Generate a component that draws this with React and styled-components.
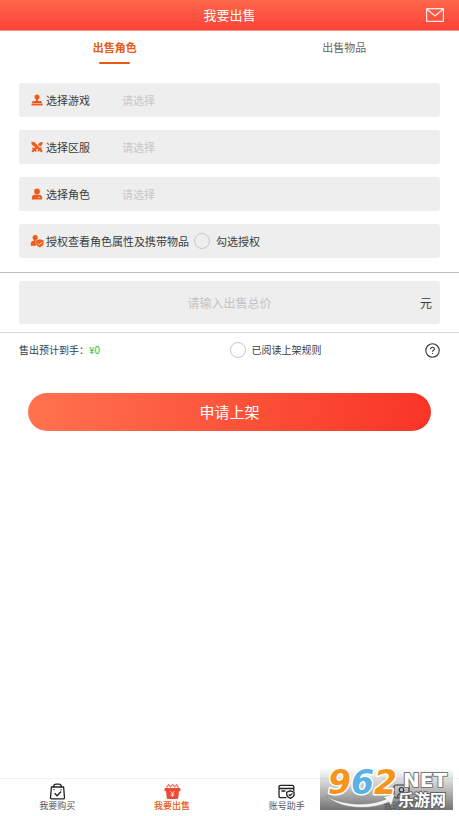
import { useState } from "react";
import styled, { createGlobalStyle } from "styled-components";

const GlobalStyle = createGlobalStyle`
  * {
    box-sizing: border-box;
  }
  body {
    margin: 0;
    background: #fff;
    color: #3c3c3c;
    font-family: "Noto Sans CJK SC", "Noto Sans", sans-serif;
  }
  button,
  input,
  select {
    font-family: inherit;
    color: inherit;
    border: 0;
    padding: 0;
    margin: 0;
    background: none;
  }
  button {
    cursor: pointer;
  }
`;

const Page = styled.div`
  min-height: 100vh;
  display: flex;
  flex-direction: column;
`;

const Header = styled.header`
  display: grid;
  grid-template-columns: 1fr auto 1fr;
  align-items: center;
  height: 31px;
  padding: 0 15px;
  color: #fff;
  background: linear-gradient(#ff674c, #fb4337);
  border-bottom: 1px solid #fb8d83;
  h1 {
    grid-column: 2;
    margin: 0;
    font-size: 13px;
    font-weight: 400;
    line-height: 20px;
  }
  button {
    justify-self: end;
    display: flex;
  }
`;

const Tabs = styled.div`
  display: flex;
  margin-bottom: 19px;
`;

const Tab = styled.button`
  flex: 1;
  display: flex;
  flex-direction: column;
  align-items: center;
  gap: 7px;
  padding-top: 8px;
  font-size: 11px;
  line-height: 16px;
  font-weight: ${(p) => (p.$active ? 700 : 400)};
  color: ${(p) => (p.$active ? "#e8590f" : "#666")};
  &::after {
    content: "";
    width: 31px;
    height: 2px;
    border-radius: 1px;
    background: ${(p) => (p.$active ? "#e8590f" : "transparent")};
  }
`;

const Fields = styled.div`
  display: flex;
  flex-direction: column;
  gap: 13px;
  padding: 0 19px 14px;
`;

const Field = styled.div`
  display: flex;
  align-items: center;
  height: 34px;
  padding: 0 12px;
  background: #eee;
  border-radius: 3px;
  font-size: 11px;
  line-height: 16px;
  svg {
    flex: none;
    margin-right: 3px;
  }
`;

const FieldLabel = styled.label`
  width: 76px;
`;

const Picker = styled.select`
  flex: 1;
  appearance: none;
  font-size: 11px;
  line-height: 16px;
  color: #c8c8c8;
  outline: none;
`;

const Check = styled.label`
  display: flex;
  align-items: center;
  gap: 6px;
  margin-left: ${(p) => (p.$spaced ? "5px" : "0")};
  input {
    appearance: none;
    width: 16px;
    height: 16px;
    border: 1px solid #c8c8c8;
    border-radius: 50%;
  }
  input:checked {
    background: #e8590f;
    border-color: #e8590f;
  }
`;

const PriceArea = styled.div`
  padding: 8px 19px;
  border-top: 1px solid #bebebe;
  border-bottom: 1px solid #ddd;
`;

const PriceBox = styled.div`
  display: grid;
  grid-template-columns: 1fr 8fr 1fr;
  align-items: center;
  height: 43px;
  padding: 0 8px;
  background: #eee;
  border-radius: 3px;
  font-size: 12px;
  input {
    grid-column: 2;
    width: 100%;
    font-size: 12px;
    text-align: center;
    outline: none;
  }
  input::placeholder {
    color: #c4c4c6;
  }
  label {
    justify-self: end;
  }
`;

const Summary = styled.div`
  display: grid;
  grid-template-columns: 1fr 1fr;
  align-items: center;
  padding: 9px 19px;
  font-size: 10px;
  line-height: 16px;
`;

const Estimate = styled.div`
  color: #2c3e50;
  span {
    color: #1fbf1f;
  }
`;

const Rules = styled.div`
  display: flex;
  align-items: center;
  justify-content: space-between;
  button {
    display: flex;
  }
`;

const Submit = styled.button`
  height: 38px;
  margin: 26px 28px;
  border-radius: 19px;
  color: #fff;
  font-size: 15px;
  line-height: 20px;
  background: linear-gradient(100deg, #ff734f, #f93426);
`;

const Footer = styled.footer`
  position: relative;
  margin-top: auto;
`;

const NavBar = styled.nav`
  display: flex;
  height: 38px;
  border-top: 1px solid #f2f2f2;
`;

const NavItem = styled.a`
  flex: 1;
  display: flex;
  flex-direction: column;
  align-items: center;
  padding-top: 4px;
  font-size: 9px;
  line-height: 12px;
  text-decoration: none;
  color: ${(p) => (p.$active ? "#e8590f" : "#555")};
  font-weight: ${(p) => (p.$active ? 500 : 400)};
`;

// site badge lying over the last nav item
const Badge = styled.div`
  position: absolute;
  right: 6px;
  bottom: 6px;
  width: 133px;
  height: 42px;
  background: linear-gradient(rgba(90, 90, 90, 0), rgba(90, 90, 90, 0.35) 45%, rgba(80, 80, 80, 0.8));
  pointer-events: none;
  svg {
    display: block;
    overflow: visible;
  }
`;

const MailIcon = () => (
  <svg width="18" height="14" viewBox="0 0 18 14" fill="none" stroke="#fff" strokeOpacity="0.9" strokeWidth="1.2">
    <rect x="0.6" y="0.6" width="16.8" height="12.8" rx="0.6" />
    <path d="M1 1.2 9 8l8-6.8" />
  </svg>
);

const JoystickIcon = () => (
  <svg width="12" height="12" viewBox="0 0 12 12" fill="#f05a1a">
    <circle cx="6" cy="3" r="2.5" />
    <path d="M5 4.5h2V7h3.2l1.3 2.2h-11L1.8 7H5zM.5 9.7h11v1.9H.5z" />
  </svg>
);

const SwordsIcon = () => (
  <svg width="12" height="12" viewBox="0 0 12 12" fill="#f05a1a">
    <path d="M.2.8 3.4 1.1 9 6.9l1.1-1 1 1-1 1.2 1.7 1.7-1.6 1.6-1.7-1.7-1.2 1-1-1 1-1.1L.8 3.8z" />
    <path d="m11.7.8-.5 3-2.1 2L6.9 3.6l1.9-2.1zM4.6 5.7l1.7 1.9-1.4 1.3.8 1-1 1-1.2-1-1.6 1.7L.3 10l1.6-1.5-1-1.2 1-1 1 1z" />
  </svg>
);

const PersonIcon = () => (
  <svg width="12" height="12" viewBox="0 0 12 12" fill="#f05a1a">
    <circle cx="6" cy="3.5" r="2.9" />
    <path d="M.8 11.5V9.6C.8 7.7 2.2 6.7 4 6.7h4c1.8 0 3.2 1 3.2 2.9v1.9z" />
    <path d="M7.2 9.4h2" stroke="#eee" strokeWidth="0.7" />
  </svg>
);

const PersonShieldIcon = () => (
  <svg width="12" height="12" viewBox="0 0 12 12" fill="#f05a1a" overflow="visible">
    <circle cx="4.2" cy="2.6" r="2.6" />
    <path d="M2.8 4.4h3v1.4L5 6.8v4H-.2V8.4c0-1.7 1.4-2.4 3-2.7z" />
    <path d="m8.8 4 4 1.3v3c0 2.1-1.6 3.2-4 4.3-2.3-1.1-4-2.2-4-4.3v-3z" stroke="#eee" strokeWidth="0.5" />
    <path d="m7 8.2 1.5 1.5L11 7.1" fill="none" stroke="#eee" strokeWidth="0.9" />
  </svg>
);

const HelpIcon = () => (
  <svg width="15" height="15" viewBox="0 0 15 15" fill="none" stroke="#333" strokeWidth="1.1">
    <circle cx="7.5" cy="7.5" r="6.7" />
    <path d="M5.6 6.2c0-1.3.8-2 1.9-2s1.9.7 1.9 1.7c0 1.3-1.9 1.4-1.9 2.9M7.5 9.9v1.2" />
  </svg>
);

const BagIcon = () => (
  <svg width="17" height="17" viewBox="0 0 17 17" fill="none" stroke="#222" strokeWidth="1.3">
    <path d="M2.4 4h12.2l.9 10.8c0 .7-.4 1.1-1.1 1.1H2.6c-.7 0-1.1-.4-1.1-1.1z" strokeLinejoin="round" />
    <path d="M4.4 4C4.8 2.1 6 1.2 7 1.2h3c1 0 2.2.9 2.6 2.8M5 6.2v1M12 6.2v1M5.6 10.2l2.5 2.5 4-4.2" />
  </svg>
);

const BasketIcon = () => (
  <svg width="17" height="17" viewBox="0 0 17 17" fill="#f04b32">
    <path d="M.6 5h15.8v3.3H15l-.7 6.2c-.1 1-.7 1.5-1.6 1.5H4.3c-.9 0-1.5-.5-1.6-1.5L2 8.3H.6z" />
    <path d="m2.4 4.6 2.2-3 2 2.2 2-2.4 2 2.4 2-2.2 2 3" fill="none" stroke="#f0705a" strokeWidth="1.2" />
    <path d="m6.6 8.2 1.9 2.3 1.9-2.3M8.5 10.3v3.5M6.7 10.9h3.6M6.7 12.4h3.6" fill="none" stroke="#fff" strokeOpacity="0.85" strokeWidth="0.8" />
  </svg>
);

const WalletIcon = () => (
  <svg width="17" height="17" viewBox="0 0 17 17" fill="none" stroke="#222" strokeWidth="1.3">
    <path d="M8.5 14.6H2.6c-1 0-1.6-.6-1.6-1.6V4c0-1 .6-1.6 1.6-1.6h11.6c1 0 1.6.6 1.6 1.6v4M1 5.5h14.8M3.4 8h4" />
    <path d="m12.4 7.8 3.7 1.3v2.4c0 1.8-1.5 3-3.7 3.9-2.2-.9-3.7-2.1-3.7-3.9V9.1z" fill="#fff" />
    <path d="m10.7 11.4 1.4 1.3 2.3-2.3" />
  </svg>
);

const AccountIcon = () => (
  <svg width="17" height="17" viewBox="0 0 17 17" fill="none" stroke="#222" strokeWidth="1.2">
    <rect x="1" y="2" width="15" height="13" rx="2" />
    <circle cx="8.5" cy="6.8" r="2.3" />
    <path d="M4.2 14.6c.4-2.8 2-4.2 4.3-4.2s3.9 1.4 4.3 4.2" />
  </svg>
);

const BadgeArt = () => (
  <svg width="133" height="42" viewBox="0 0 133 42">
    <path d="M6 28c17 9 42 11 60 3l-4-2 13-3-4 12-2-4C49 43 20 41 6 28z" fill="#f2f2f2" stroke="#777" strokeWidth="0.6" />
    <g fontFamily="DejaVu Sans" fontWeight="700" paintOrder="stroke" strokeLinejoin="round">
      <g fontSize="33" fontStyle="italic" stroke="#fff" strokeWidth="3">
        <text x="8" y="26" fill="#f7941d">9</text>
        <text x="31" y="26" fill="#5bb0e4">6</text>
        <text x="54" y="26" fill="#f7941d">2</text>
      </g>
      <text x="83" y="19" fontSize="20" fill="#fff" stroke="#777" strokeWidth="2">NET</text>
    </g>
    <g
      fontFamily="Noto Sans CJK SC"
      fontWeight="700"
      fontSize="16"
      fill="#fff"
      stroke="#666"
      strokeWidth="2"
      paintOrder="stroke"
    >
      <text x="78" y="38">乐游网</text>
    </g>
  </svg>
);

const pickers = [
  { id: "game", label: "选择游戏", Icon: JoystickIcon },
  { id: "server", label: "选择区服", Icon: SwordsIcon },
  { id: "role", label: "选择角色", Icon: PersonIcon },
];

const navItems = [
  { label: "我要购买", Icon: BagIcon },
  { label: "我要出售", Icon: BasketIcon, active: true },
  { label: "账号助手", Icon: WalletIcon },
  { label: "我的账户", Icon: AccountIcon },
];

export default function App() {
  const [tab, setTab] = useState(0);
  const [price, setPrice] = useState("");

  return (
    <Page>
      <GlobalStyle />
      <Header>
        <h1>我要出售</h1>
        <button type="button" aria-label="消息">
          <MailIcon />
        </button>
      </Header>

      <Tabs role="tablist">
        {["出售角色", "出售物品"].map((name, i) => (
          <Tab key={name} type="button" role="tab" aria-selected={tab === i} $active={tab === i} onClick={() => setTab(i)}>
            {name}
          </Tab>
        ))}
      </Tabs>

      <Fields>
        {pickers.map(({ id, label, Icon }) => (
          <Field key={id}>
            <Icon />
            <FieldLabel htmlFor={id}>{label}</FieldLabel>
            <Picker id={id}>
              <option>请选择</option>
            </Picker>
          </Field>
        ))}
        <Field>
          <PersonShieldIcon />
          <span>授权查看角色属性及携带物品</span>
          <Check $spaced>
            <input type="checkbox" />
            勾选授权
          </Check>
        </Field>
      </Fields>

      <PriceArea>
        <PriceBox>
          <input id="price" placeholder="请输入出售总价" value={price} onChange={(e) => setPrice(e.target.value)} />
          <label htmlFor="price">元</label>
        </PriceBox>
      </PriceArea>

      <Summary>
        <Estimate>
          售出预计到手：<span>¥{price || 0}</span>
        </Estimate>
        <Rules>
          <Check>
            <input type="checkbox" />
            已阅读上架规则
          </Check>
          <button type="button" aria-label="帮助">
            <HelpIcon />
          </button>
        </Rules>
      </Summary>

      <Submit type="button">申请上架</Submit>

      <Footer>
        <NavBar>
          {navItems.map(({ label, Icon, active }) => (
            <NavItem key={label} href="#" $active={active}>
              <Icon />
              {label}
            </NavItem>
          ))}
        </NavBar>
        <Badge>
          <BadgeArt />
        </Badge>
      </Footer>
    </Page>
  );
}
